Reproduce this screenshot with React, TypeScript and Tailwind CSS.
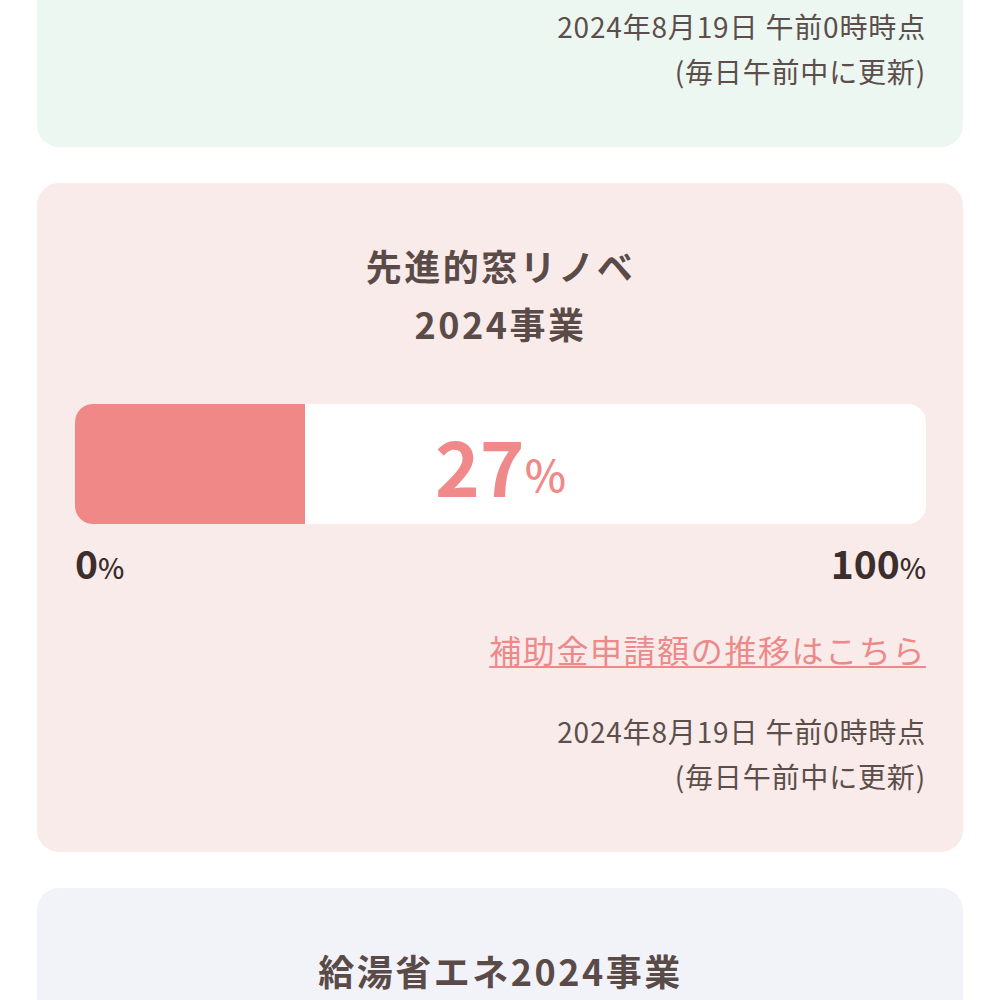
import React from "react";

type Project = {
  title: string[];
  percent: number;
  bg: string;
};

const projects: Project[] = [
  { title: ["子育てエコホーム", "支援事業"], percent: 64, bg: "bg-[#edf7f1]" },
  { title: ["先進的窓リノベ", "2024事業"], percent: 27, bg: "bg-[#f9ebea]" },
  { title: ["給湯省エネ2024事業"], percent: 41, bg: "bg-[#f2f3f9]" },
];

const ProgressCard: React.FC<{ project: Project }> = ({ project }) => {
  return (
    <section className={`rounded-[22px] pl-[38px] pr-[37px] pt-[54px] pb-[53px] ${project.bg}`}>
      {/* title */}
      <h2 className="text-center text-[36px] font-bold leading-[57.6px] tracking-[0.07em] text-[#5a4b48]">
        {project.title.map((line) => (
          <span key={line} className="block">
            {line}
          </span>
        ))}
      </h2>

      {/* progress bar */}
      <div className="relative mt-[52px] h-[120px] overflow-hidden rounded-[18px] bg-white">
        <div className="h-full bg-[#f08888]" style={{ width: `${project.percent}%` }} />
        <div className="absolute inset-0 flex items-center justify-center text-[#f08a8a]">
          <span className="text-[76px] font-bold leading-none">{project.percent}</span>
          <span className="mt-[18px] text-[44px] font-medium leading-none">%</span>
        </div>
      </div>

      <div className="mt-[13px] flex items-baseline justify-between leading-[51px] text-[#3b2e2c]">
        <span>
          <span className="text-[39px] font-bold">0</span>
          <span className="text-[28px] font-medium">%</span>
        </span>
        <span>
          <span className="text-[39px] font-bold">100</span>
          <span className="text-[28px] font-medium">%</span>
        </span>
      </div>

      <div className="mt-[26px] text-right">
        <a
          href="#"
          className="text-[32px] leading-[51px] tracking-[0.05em] text-[#ec8a8a] underline decoration-[2px] underline-offset-[3px]"
        >
          補助金申請額の推移はこちら
        </a>
      </div>

      <p className="mt-[34px] text-right text-[28px] leading-[45px] tracking-[0.03em] text-[#5b4e4b]">
        2024年8月19日 午前0時時点
        <br />
        (毎日午前中に更新)
      </p>
    </section>
  );
};

const App: React.FC = () => {
  return (
    <div className="h-[1000px] overflow-hidden bg-white font-['Noto_Sans_CJK_JP','Noto_Sans',sans-serif]">
      <div className="-mt-[522px] flex flex-col gap-[36px] px-[37px]">
        {projects.map((p) => (
          <ProgressCard key={p.title.join("")} project={p} />
        ))}
      </div>
    </div>
  );
};

export default App;
